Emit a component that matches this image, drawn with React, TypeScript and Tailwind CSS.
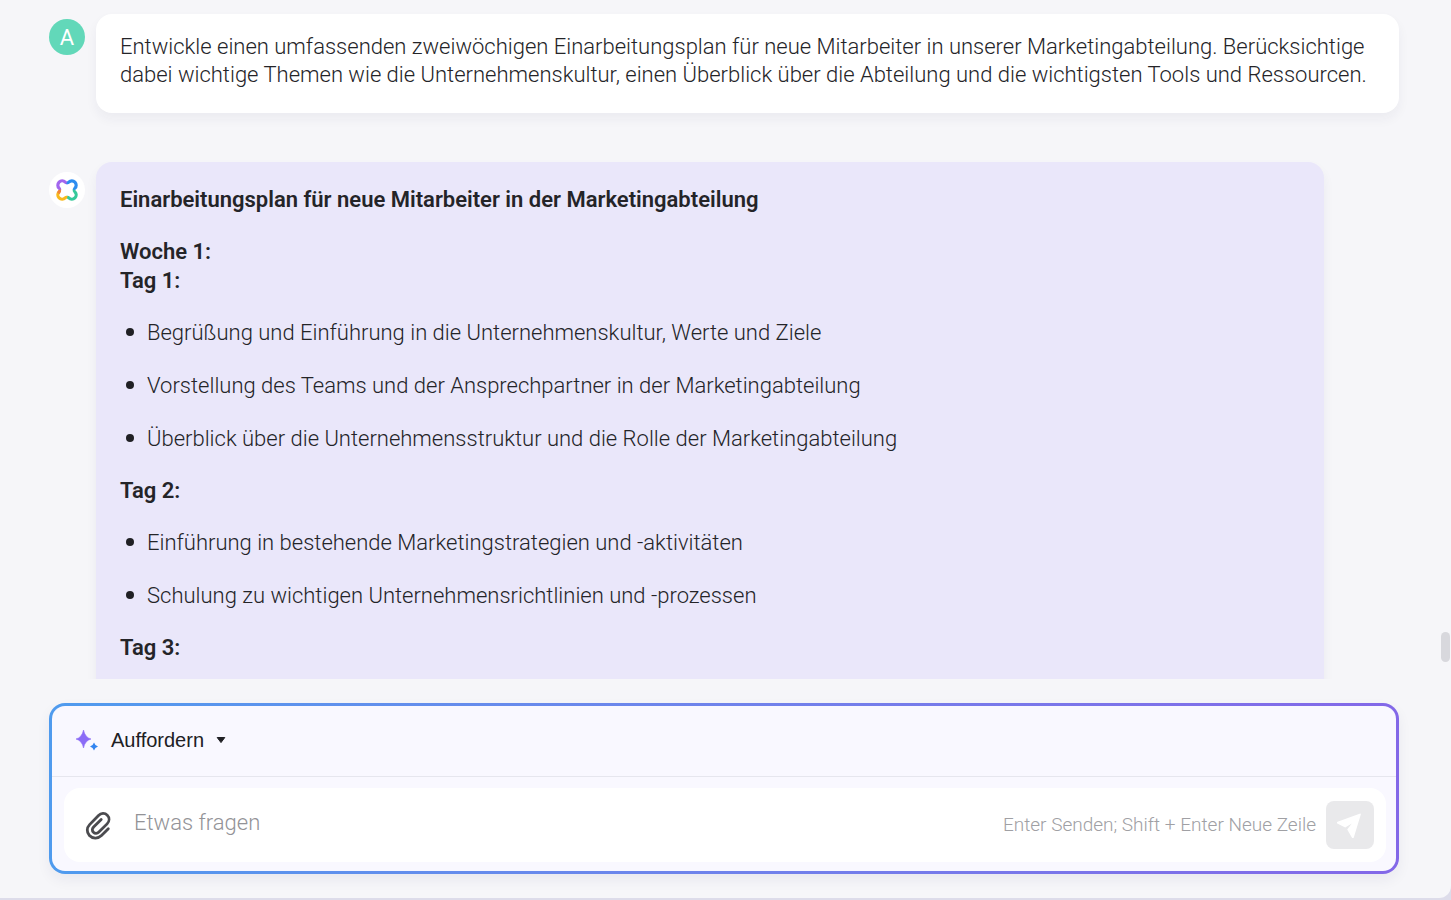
import type { ReactNode } from "react";
import { clsx } from "clsx";

type Day = {
  title: string;
  items: string[];
};

const FIRST_DAY: string[] = [
  "Begrüßung und Einführung in die Unternehmenskultur, Werte und Ziele",
  "Vorstellung des Teams und der Ansprechpartner in der Marketingabteilung",
  "Überblick über die Unternehmensstruktur und die Rolle der Marketingabteilung",
];

const DAYS: Day[] = [
  {
    title: "Tag 2:",
    items: [
      "Einführung in bestehende Marketingstrategien und -aktivitäten",
      "Schulung zu wichtigen Unternehmensrichtlinien und -prozessen",
    ],
  },
  { title: "Tag 3:", items: [] },
];

function CloverLogo() {
  return (
    <svg viewBox="0 0 24 24" className="size-6" fill="none" strokeWidth="3.2" aria-hidden="true">
      <path d="M3.900 12.200Q5 11.200 4.100 10.200A4.100 4.100 0 1 1 10.200 4.100Q11.200 5 12.200 4.600" stroke="#a266ee" />
      <path d="M11.800 4.600Q12.800 5 13.800 4.100A4.100 4.100 0 1 1 19.900 10.200Q19 11.200 19.400 12.200" stroke="#2d8cf0" />
      <path d="M19.400 11.800Q19 12.800 19.900 13.800A4.100 4.100 0 1 1 13.800 19.900Q12.800 19 11.800 19.400" stroke="#35c99a" />
      <path d="M12.200 19.400Q11.200 19 10.200 19.900A4.100 4.100 0 1 1 4.100 13.800" stroke="#f8b91c" />
      <path d="M3.200 15.200Q5 13.200 4.600 11.800" stroke="#f0853c" />
    </svg>
  );
}

function Sparkles() {
  return (
    <svg viewBox="0 0 24 24" className="size-6" aria-hidden="true">
      <path d="M8.500 2Q10 9.500 16 11Q10 12.500 8.500 20Q7 12.500 1 11Q7 9.500 8.500 2Z" fill="#8b6cf6" stroke="#8b6cf6" strokeWidth="0.6" strokeLinejoin="round" />
      <path d="M19 14.500Q19.900 17.500 23 18.500Q19.900 19.500 19 22.500Q18.100 19.500 15 18.500Q18.100 17.500 19 14.500Z" fill="#3385f0" />
    </svg>
  );
}

function PaperclipIcon() {
  return (
    <svg
      viewBox="0 0 28 30"
      className="h-[30px] w-7"
      fill="none"
      stroke="#4b4b4f"
      strokeWidth="2.8"
      strokeLinecap="round"
      aria-hidden="true"
    >
      <path d="M24.300 18.800L17.500 25.600C14 29 8.500 28.800 5.400 25.500C2.400 22.200 2.700 17.600 5.600 14.600L14.500 5.500C17 2.900 20.900 2.800 23.300 5.200C25.700 7.600 25.500 11.400 23.100 13.900L14.900 22.100C13.200 23.800 10.900 23.800 9.400 22.300C7.900 20.800 8 18.500 9.600 16.900L17.200 9.400" />
    </svg>
  );
}

function SendIcon() {
  return (
    <svg viewBox="0 0 26 26" className="size-[26px]" fill="#fff" aria-hidden="true">
      <path d="M23.300 1.600Q24 1.800 23.800 2.600L16.800 25.500Q16 27.200 15 25.700L10.200 17.500L14.800 11.600L8.200 15.500L.3 11.500Q-.9 10.500 .5 9.700Z" />
    </svg>
  );
}

function Message({ avatar, children, className }: { avatar: ReactNode; children: ReactNode; className?: string }) {
  return (
    <article className="flex items-start gap-[11px]">
      {avatar}
      <div className={clsx("min-w-0 flex-1 px-6 shadow-[0_6px_12px_rgba(40,40,80,0.05)]", className)}>{children}</div>
    </article>
  );
}

function BulletList({ items }: { items: string[] }) {
  return (
    <ul className="flex flex-col gap-6">
      {items.map((item) => (
        <li key={item} className="flex gap-[13px] pl-1.5">
          <span className="mt-2.5 size-2 shrink-0 rounded-full bg-[#202024]" />
          <span>{item}</span>
        </li>
      ))}
    </ul>
  );
}

export default function App() {
  return (
    <div className="h-screen bg-[#dddcea] pb-0.5 font-['Roboto',sans-serif] text-[22px] text-[#242428]">
      <div className="relative flex h-full flex-col rounded-br-xl bg-[#f6f6f9] pr-[52px] pb-6 pl-[49px]">
        {/* Conversation */}
        <main className="-mx-6 flex min-h-0 flex-1 flex-col gap-[49px] overflow-hidden px-6 pt-3.5">
          <Message
            avatar={
              <div className="mt-[5px] flex size-9 shrink-0 items-center justify-center rounded-full bg-[#62d8b9] text-white">
                A
              </div>
            }
            className="rounded-2xl bg-white pt-[19px] pb-6 leading-7 font-light"
          >
            <p>
              Entwickle einen umfassenden zweiwöchigen Einarbeitungsplan für neue Mitarbeiter in unserer
              Marketingabteilung. Berücksichtige dabei wichtige Themen wie die Unternehmenskultur, einen Überblick über
              die Abteilung und die wichtigsten Tools und Ressourcen.
            </p>
          </Message>

          <Message
            avatar={
              <div className="mt-2.5 flex size-9 shrink-0 items-center justify-center rounded-full bg-white">
                <CloverLogo />
              </div>
            }
            className="mr-[75px] flex flex-col gap-[23px] rounded-2xl bg-[#eae7fa] pt-[23px] pb-6 leading-[29px] font-light"
          >
            <h2 className="font-semibold">Einarbeitungsplan für neue Mitarbeiter in der Marketingabteilung</h2>
            <h3 className="font-semibold">
              Woche 1:
              <br />
              Tag 1:
            </h3>
            <BulletList items={FIRST_DAY} />
            {DAYS.map((day) => (
              <section key={day.title} className="flex flex-col gap-[23px]">
                <h3 className="font-semibold">{day.title}</h3>
                {day.items.length > 0 ? <BulletList items={day.items} /> : null}
              </section>
            ))}
            {/* keeps the bubble running past the fold */}
            <div className="h-6 shrink-0" />
          </Message>
        </main>

        {/* Composer */}
        <form
          className="mt-6 rounded-2xl bg-linear-to-r from-[#4f9bee] to-[#8368e8] p-[3px] shadow-[0_6px_14px_rgba(40,40,80,0.06)]"
          onSubmit={(event) => event.preventDefault()}
        >
          <div className="rounded-[13px] bg-[#f9f8ff]">
            <div className="flex h-[71px] items-center border-b border-[#e6e6ee] px-[23px] pb-0.5">
              <button
                type="button"
                className="flex items-center gap-3 font-['Liberation_Sans',sans-serif] text-xl text-[#202024]"
              >
                <Sparkles />
                Auffordern
                <svg viewBox="0 0 10 8" className="h-2 w-2.5" aria-hidden="true">
                  <path d="M1.200 1.500H8.800L5 6.600Z" fill="#202024" stroke="#202024" strokeLinejoin="round" />
                </svg>
              </button>
            </div>
            <div className="pt-[11px] pr-2.5 pb-[9px] pl-3">
              <div className="flex h-[74px] items-center rounded-2xl bg-white pr-3 pl-5">
                <button type="button" aria-label="Datei anhängen">
                  <PaperclipIcon />
                </button>
                <input
                  type="text"
                  aria-label="Etwas fragen"
                  placeholder="Etwas fragen"
                  className="ml-[22px] min-w-0 flex-1 pb-1.5 font-light outline-none placeholder:text-[#939397]"
                />
                <span className="text-[19px] font-light text-[#a0a0a4]">Enter Senden; Shift + Enter Neue Zeile</span>
                <button
                  type="submit"
                  aria-label="Senden"
                  className="ml-2.5 flex size-12 items-center justify-center rounded-lg bg-[#e9e9eb]"
                >
                  <SendIcon />
                </button>
              </div>
            </div>
          </div>
        </form>

        {/* Scroll thumb */}
        <div className="absolute top-[632px] right-px h-[30px] w-[9px] rounded-full bg-[#d8d8dd]" />
      </div>
    </div>
  );
}
